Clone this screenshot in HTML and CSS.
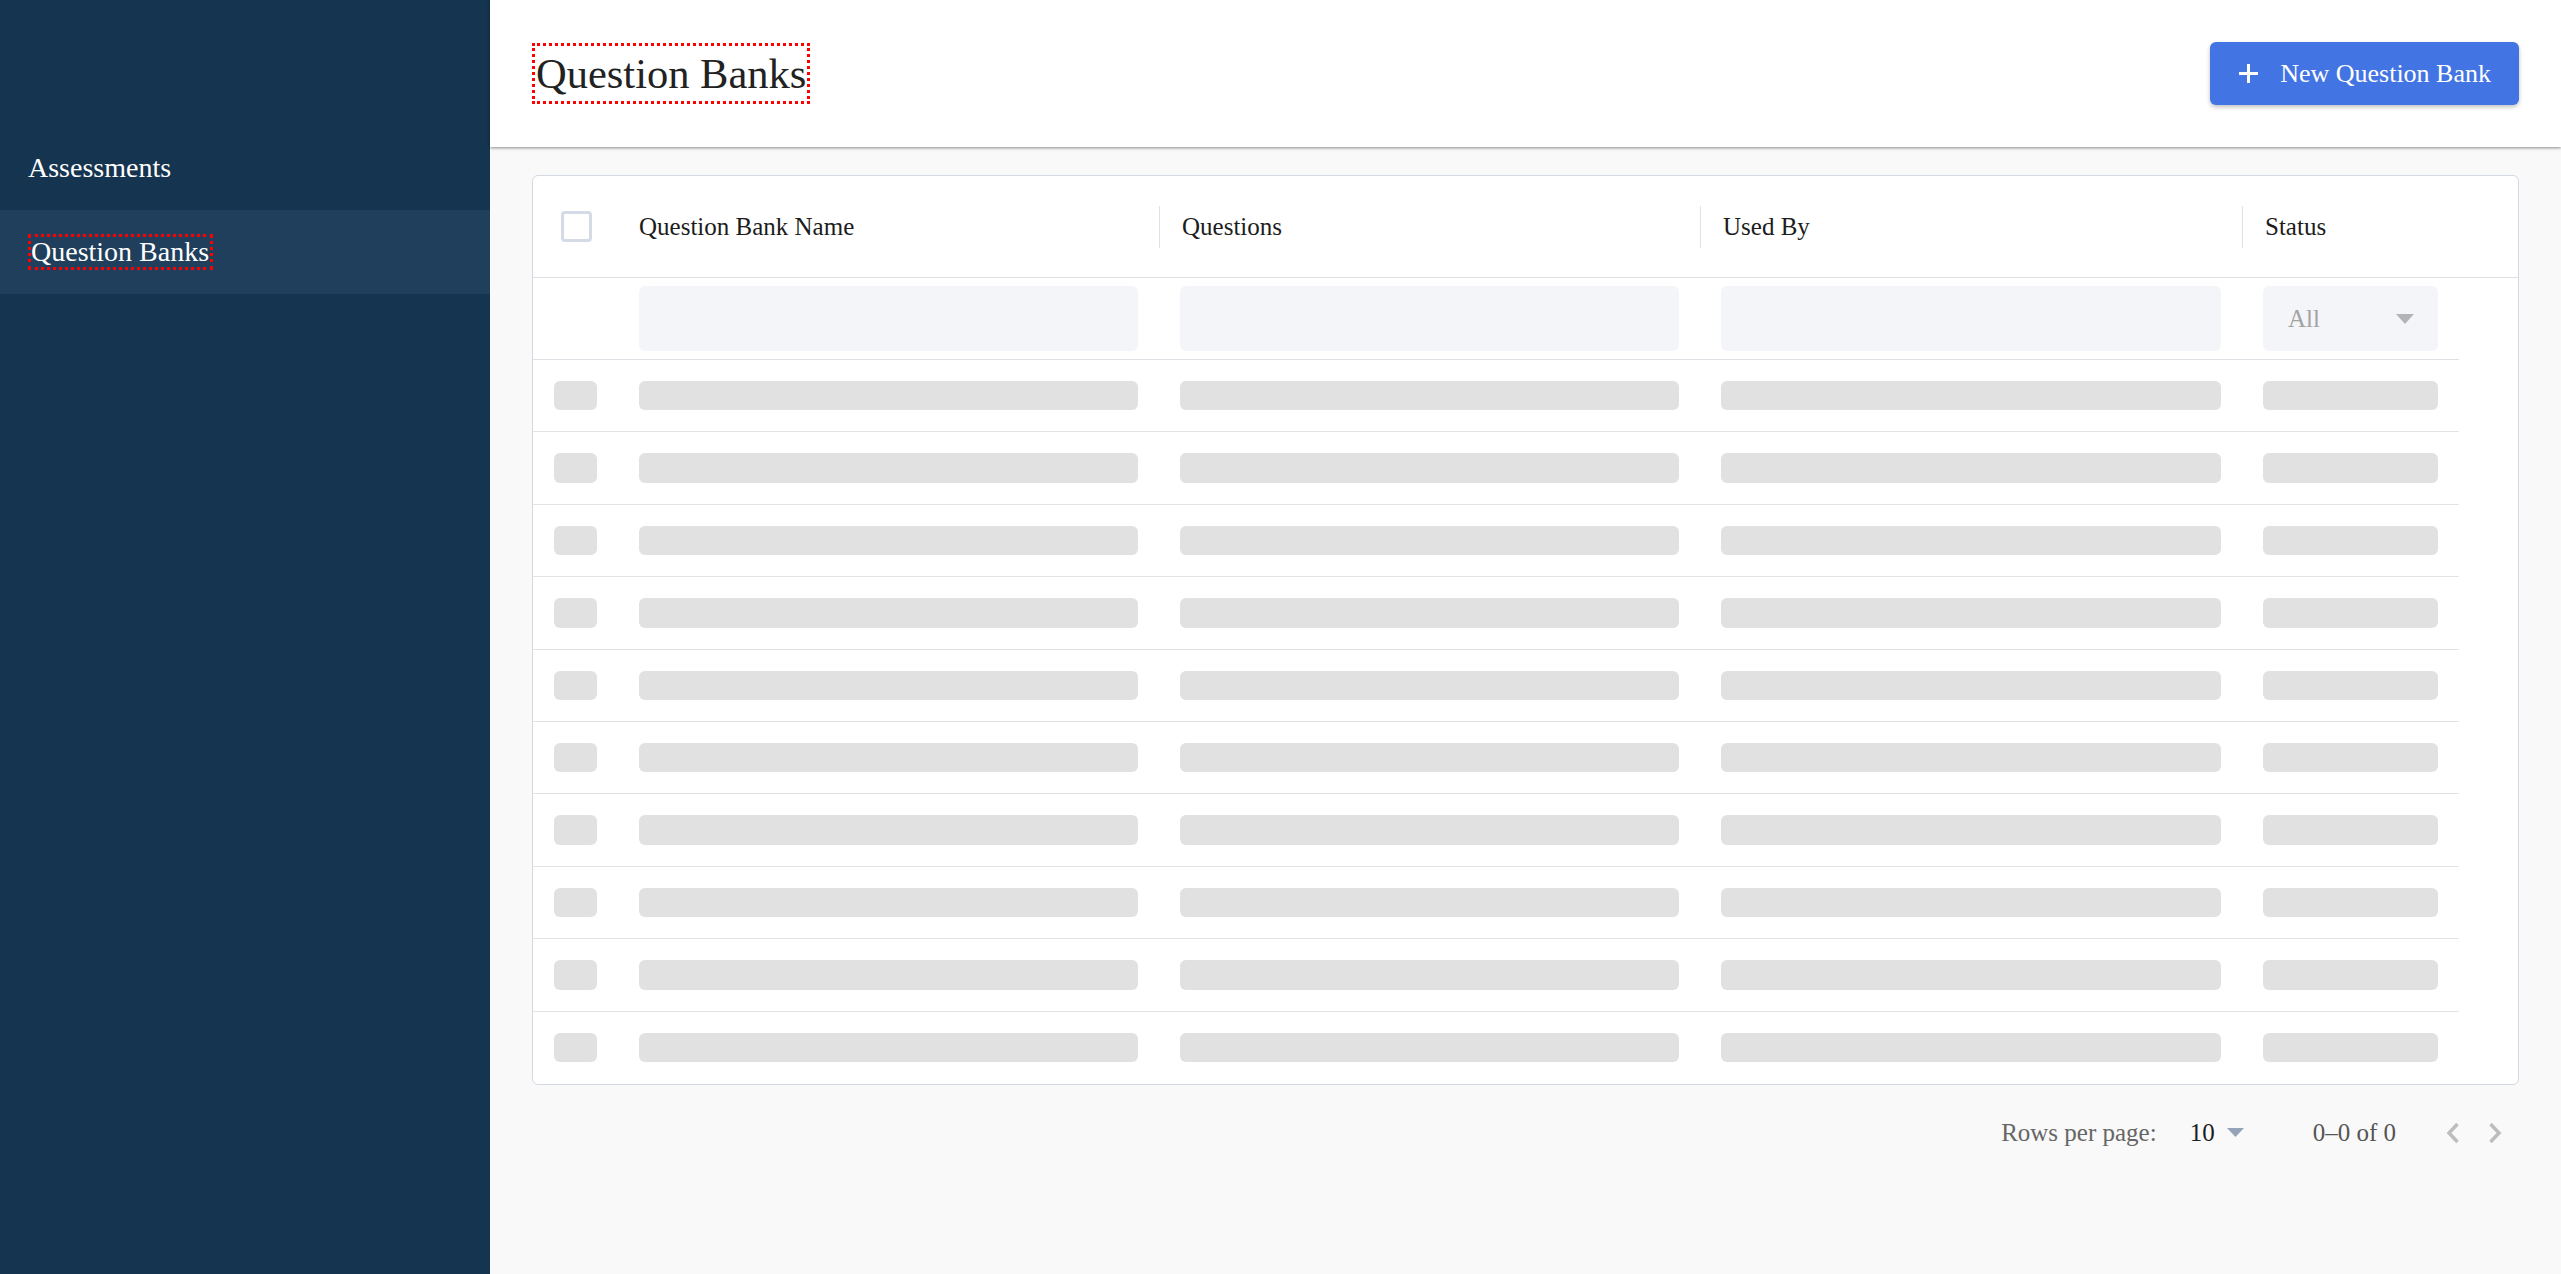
FILE: index.html
```html
<!DOCTYPE html>
<html lang="en">
<head>
<meta charset="utf-8">
<title>Question Banks</title>
<link rel="stylesheet" href="styles.css">
</head>
<body>
<div class="app">
  <aside class="sidebar">
    <nav class="nav">
      <div class="nav-item">Assessments</div>
      <div class="nav-item active"><span class="focus-ring">Question Banks</span></div>
    </nav>
  </aside>
  <main class="main">
    <header class="topbar">
      <h1 class="title">Question Banks</h1>
      <button class="btn-primary">
        <svg class="plus" width="21" height="21" viewBox="0 0 21 21"><path d="M10.5 1v19M1 10.5h19" stroke="#fff" stroke-width="3" fill="none"/></svg>
        <span>New Question Bank</span>
      </button>
    </header>
    <section class="content">
      <div class="card">
        <div class="thead">
          <div class="th th-check"><span class="checkbox"></span></div>
          <div class="th">Question Bank Name</div>
          <div class="th th-div">Questions</div>
          <div class="th th-div">Used By</div>
          <div class="th th-div">Status</div>
        </div>
        <div class="filter-row">
          <div class="cell"></div>
          <div class="cell"><div class="filter-input"></div></div>
          <div class="cell"><div class="filter-input"></div></div>
          <div class="cell"><div class="filter-input"></div></div>
          <div class="cell"><div class="filter-select"><span>All</span><svg width="18" height="10" viewBox="0 0 18 10"><path d="M0 0h18L9 10z" fill="#b4b4b8"/></svg></div></div>
        </div>
        <div class="tbody">
          <div class="row"><div class="cell"><div class="sk"></div></div><div class="cell"><div class="sk"></div></div><div class="cell"><div class="sk"></div></div><div class="cell"><div class="sk"></div></div><div class="cell"><div class="sk"></div></div></div>
          <div class="row"><div class="cell"><div class="sk"></div></div><div class="cell"><div class="sk"></div></div><div class="cell"><div class="sk"></div></div><div class="cell"><div class="sk"></div></div><div class="cell"><div class="sk"></div></div></div>
          <div class="row"><div class="cell"><div class="sk"></div></div><div class="cell"><div class="sk"></div></div><div class="cell"><div class="sk"></div></div><div class="cell"><div class="sk"></div></div><div class="cell"><div class="sk"></div></div></div>
          <div class="row"><div class="cell"><div class="sk"></div></div><div class="cell"><div class="sk"></div></div><div class="cell"><div class="sk"></div></div><div class="cell"><div class="sk"></div></div><div class="cell"><div class="sk"></div></div></div>
          <div class="row"><div class="cell"><div class="sk"></div></div><div class="cell"><div class="sk"></div></div><div class="cell"><div class="sk"></div></div><div class="cell"><div class="sk"></div></div><div class="cell"><div class="sk"></div></div></div>
          <div class="row"><div class="cell"><div class="sk"></div></div><div class="cell"><div class="sk"></div></div><div class="cell"><div class="sk"></div></div><div class="cell"><div class="sk"></div></div><div class="cell"><div class="sk"></div></div></div>
          <div class="row"><div class="cell"><div class="sk"></div></div><div class="cell"><div class="sk"></div></div><div class="cell"><div class="sk"></div></div><div class="cell"><div class="sk"></div></div><div class="cell"><div class="sk"></div></div></div>
          <div class="row"><div class="cell"><div class="sk"></div></div><div class="cell"><div class="sk"></div></div><div class="cell"><div class="sk"></div></div><div class="cell"><div class="sk"></div></div><div class="cell"><div class="sk"></div></div></div>
          <div class="row"><div class="cell"><div class="sk"></div></div><div class="cell"><div class="sk"></div></div><div class="cell"><div class="sk"></div></div><div class="cell"><div class="sk"></div></div><div class="cell"><div class="sk"></div></div></div>
          <div class="row"><div class="cell"><div class="sk"></div></div><div class="cell"><div class="sk"></div></div><div class="cell"><div class="sk"></div></div><div class="cell"><div class="sk"></div></div><div class="cell"><div class="sk"></div></div></div>
        </div>
      </div>
      <div class="pagination">
        <span class="rpp-label">Rows per page:</span>
        <span class="rpp-value">10</span>
        <svg class="rpp-arrow" width="17" height="9" viewBox="0 0 17 9"><path d="M0 0h17L8.5 9z" fill="#94a3b8"/></svg>
        <span class="range">0–0 of 0</span>
        <button class="page-btn first"><svg width="14" height="22" viewBox="0 0 14 22"><path d="M11.5 2L3 11l8.5 9" stroke="#bdbdbd" stroke-width="3.5" fill="none"/></svg></button>
        <button class="page-btn"><svg width="14" height="22" viewBox="0 0 14 22"><path d="M2.5 2L11 11l-8.5 9" stroke="#bdbdbd" stroke-width="3.5" fill="none"/></svg></button>
      </div>
    </section>
  </main>
</div>
</body>
</html>
```

FILE: styles.css
```css
html, body {
  margin: 0;
  padding: 0;
  height: 100%;
}

body {
  font-family: "Liberation Serif", "Times New Roman", serif;
  color: #1c1c1c;
}

.app {
  display: flex;
  height: 100vh;
}

.sidebar {
  width: 490px;
  flex: 0 0 490px;
  background: #15344f;
  padding-top: 126px;
  box-sizing: border-box;
}

.nav {
  display: flex;
  flex-direction: column;
}

.nav-item {
  height: 84px;
  padding: 0 28px;
  display: flex;
  align-items: center;
  font-size: 28px;
  color: #ffffff;
}

.nav-item.active {
  background: #1f3f5c;
}

.focus-ring {
  border: 3px dotted #ff0000;
  line-height: 30px;
  padding-right: 1px;
}

.main {
  flex: 1;
  min-width: 0;
  background: #f9f9f9;
  display: flex;
  flex-direction: column;
}

.topbar {
  height: 147px;
  flex: 0 0 147px;
  background: #ffffff;
  padding: 0 42px;
  display: flex;
  align-items: center;
  justify-content: space-between;
  box-shadow: 0 1px 3px rgba(0, 0, 0, 0.45);
  position: relative;
  z-index: 1;
}

.title {
  margin: 0;
  font-size: 42.5px;
  font-weight: normal;
  line-height: 55px;
  color: #222222;
  border: 3px dotted #ff0000;
  padding: 0 1px;
}

.btn-primary {
  height: 63px;
  padding: 0 28px;
  background: #4274e3;
  color: #ffffff;
  border: 0;
  border-radius: 6px;
  font-family: "Liberation Serif", "Times New Roman", serif;
  font-size: 26px;
  display: flex;
  align-items: center;
  gap: 21px;
  box-shadow: 0 2px 4px rgba(0, 0, 0, 0.25);
}

.content {
  padding: 28px 42px 0;
}

.card {
  background: #ffffff;
  border: 1px solid #d2d9e4;
  border-radius: 6px;
  overflow: hidden;
}

.thead,
.filter-row,
.row {
  display: grid;
  grid-template-columns: 85px 541px 541px 542px 217px;
}

.thead {
  height: 101px;
  align-items: center;
  border-bottom: 1px solid #dde0e5;
}

.th {
  height: 42px;
  line-height: 42px;
  padding: 0 21px;
  font-size: 25px;
  color: #1c1c1c;
  white-space: nowrap;
}

.th-div {
  border-left: 1px solid #e2e2e2;
  padding-left: 22px;
}

.th-check {
  display: flex;
  align-items: center;
  justify-content: center;
}

.checkbox {
  width: 25px;
  height: 25px;
  border: 3px solid #d4dbe6;
  border-radius: 4px;
  margin-left: 1px;
}

.cell {
  padding: 0 21px;
}

.filter-row {
  width: 1926px;
  padding: 8px 0;
  border-bottom: 1px solid #dde0e5;
}

.filter-input {
  height: 65px;
  background: #f4f5f8;
  border-radius: 6px;
}

.filter-select {
  height: 65px;
  background: #f4f5f8;
  border-radius: 6px;
  padding: 0 24px 0 25px;
  display: flex;
  align-items: center;
  justify-content: space-between;
  font-size: 25px;
  color: #a3a3a3;
}

.tbody {
  width: 1926px;
}

.row {
  height: 72.4px;
  box-sizing: border-box;
  align-items: center;
  border-bottom: 1px solid #e3e3e3;
}

.row:last-child {
  border-bottom: 0;
}

.sk {
  height: 29.4px;
  background: #e1e1e1;
  border-radius: 6px;
}

.pagination {
  display: flex;
  justify-content: flex-end;
  align-items: center;
  height: 56px;
  margin-top: 20px;
  padding-right: 3px;
  font-size: 25px;
}

.rpp-label {
  color: #666666;
}

.rpp-value {
  margin-left: 33px;
  color: #1c1c1c;
}

.rpp-arrow {
  margin-left: 12px;
}

.range {
  margin-left: 69px;
  color: #555555;
}

.page-btn {
  width: 42px;
  height: 42px;
  border: 0;
  background: transparent;
  padding: 0;
  display: flex;
  align-items: center;
  justify-content: center;
}

.page-btn.first {
  margin-left: 36px;
}
```
